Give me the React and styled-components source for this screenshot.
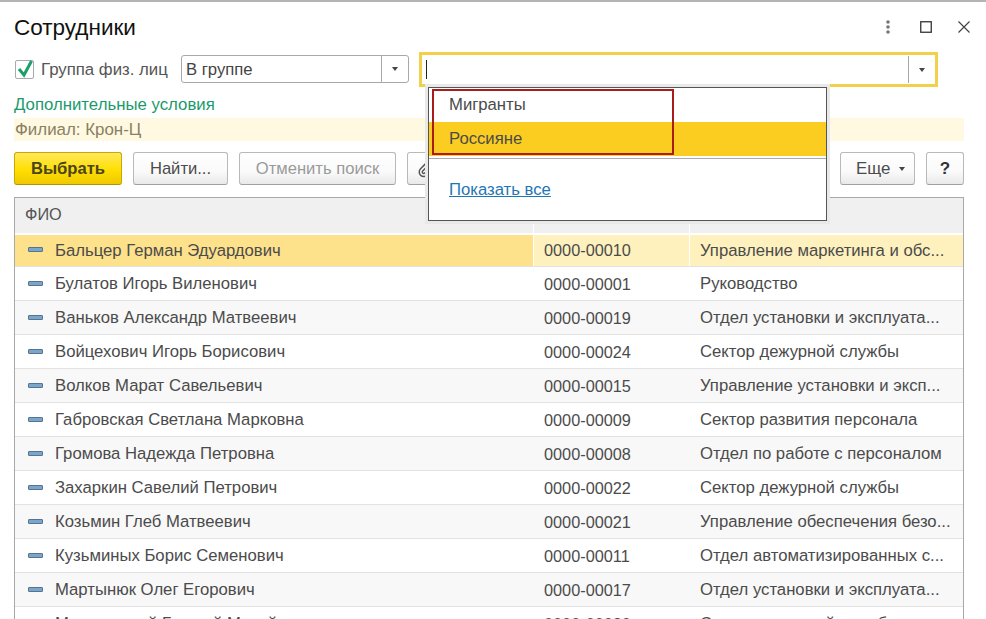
import React from "react";
import styled, { createGlobalStyle } from "styled-components";
import { Paperclip } from "lucide-react";

const GlobalStyle = createGlobalStyle`
  html, body {
    margin: 0;
    padding: 0;
    background: #fff;
    overflow: hidden;
  }
  body {
    font-family: "Liberation Sans", Arial, sans-serif;
    color: #4b4b4b;
  }
`;

const Win = styled.div`
  width: 986px;
  height: 619px;
  overflow: hidden;
  box-sizing: border-box;
  border-top: 2px solid #b4b4b4;
  padding: 0 22px 0 14px;
  position: relative;
`;

const TitleBar = styled.div`
  height: 50px;
  box-sizing: border-box;
  padding-top: 1px;
  display: flex;
  align-items: center;
  justify-content: space-between;
`;

const Title = styled.h1`
  margin: 0;
  font-size: 22.5px;
  font-weight: normal;
  color: #111;
`;

const WinButtons = styled.div`
  display: flex;
  align-items: center;
  gap: 26px;
  margin-right: -6px;
  margin-top: -1px;
`;

const Dots = styled.svg`
  margin-right: 3px;
`;

const FilterRow = styled.div`
  height: 35px;
  display: flex;
  align-items: center;
`;

const CheckLabel = styled.label`
  display: flex;
  align-items: center;
  font-size: 16.8px;
  margin-left: 1px;
  width: 166px;
  color: #555;
`;

const CheckBox = styled.span`
  width: 19px;
  height: 19px;
  box-sizing: border-box;
  border: 1px solid #aaa;
  border-radius: 2px;
  margin-right: 7px;
  position: relative;
  flex: none;
`;

const CheckMark = styled.svg`
  position: absolute;
  left: 0;
  top: -3px;
`;

const Combo = styled.div`
  width: 228px;
  height: 28px;
  box-sizing: border-box;
  border: 1px solid #a8a8a8;
  border-radius: 3px;
  display: flex;
  align-items: center;
  font-size: 16.7px;
  margin: -1px 10px 0 0;
  color: #444;
`;

const ComboText = styled.div`
  flex: 1;
  padding: 1px 0 0 4px;
`;

const ComboArrow = styled.div`
  width: 26px;
  height: 100%;
  border-left: 1px solid #a8a8a8;
  display: flex;
  align-items: center;
  justify-content: center;
`;

const Triangle = styled.span`
  width: 0;
  height: 0;
  border-left: 3.5px solid transparent;
  border-right: 3.5px solid transparent;
  border-top: 4px solid #444;
`;

const FocusCombo = styled.div`
  width: 519px;
  height: 35px;
  box-sizing: border-box;
  border: 3px solid #f3d04b;
  display: flex;
  align-items: center;
`;

const Caret = styled.span`
  width: 1px;
  height: 19px;
  background: #222;
  margin-left: 4px;
`;

const FocusArrow = styled.div`
  margin-left: auto;
  width: 26px;
  height: 27px;
  border-left: 1px solid #a8a8a8;
  display: flex;
  align-items: center;
  justify-content: center;
`;

const ExtraLink = styled.div`
  margin-top: 6px;
  height: 25px;
  line-height: 23px;
  font-size: 16.8px;
  color: #1a9a6c;
`;

const Strip = styled.div`
  height: 23px;
  line-height: 23px;
  background: #fff9e1;
  font-size: 16.9px;
  color: #8a8062;
  padding-left: 1px;
`;

const Toolbar = styled.div`
  margin-top: 11px;
  height: 33px;
  display: flex;
  gap: 11px;
`;

const Button = styled.div`
  width: ${(p) => p.$w}px;
  flex: none;
  box-sizing: border-box;
  height: 33px;
  border: 1px solid ${(p) => (p.$primary ? "#c9a800" : "#b9b9b9")};
  border-bottom-color: ${(p) => (p.$primary ? "#b09400" : "#a0a0a0")};
  border-radius: 3px;
  background: ${(p) =>
    p.$primary
      ? "linear-gradient(#ffe95c, #ffdf00 55%, #efc800)"
      : "linear-gradient(#fff, #fafafa 60%, #e9e9e9)"};
  display: flex;
  align-items: center;
  justify-content: center;
  font-size: 16.6px;
  font-weight: ${(p) => (p.$primary ? "bold" : "normal")};
  color: ${(p) => (p.$primary ? "#4a4420" : p.$off ? "#9a9a9a" : "#4b4b4b")};
`;

const MoreButton = styled(Button)`
  justify-content: flex-start;
  padding-left: 15px;
  gap: 9px;
  font-size: 16.9px;
`;

const HelpMark = styled.span`
  font-size: 17px;
  font-weight: bold;
  color: #333;
`;

const Spacer = styled.div`
  flex: 1;
`;

const Table = styled.div`
  margin-top: 12px;
  border: 1px solid #a8a8a8;
  border-bottom: 0;
`;

const HeadRow = styled.div`
  height: 37px;
  box-sizing: border-box;
  background: #f0f0f0;
  display: grid;
  grid-template-columns: 518px 156px 1fr;
  border-bottom: 2px solid #fff;
`;

const HeadCell = styled.div`
  padding-left: 10px;
  font-size: 16.3px;
  line-height: 33px;
  color: #555;
  border-left: ${(p) => (p.$first ? "0" : "1px solid #fff")};
`;

const Row = styled.div`
  height: ${(p) => (p.$active ? 32 : 34)}px;
  box-sizing: border-box;
  padding-top: ${(p) => (p.$active ? 0 : 1)}px;
  display: grid;
  grid-template-columns: 518px 156px 1fr;
  align-items: stretch;
  border-bottom: 1px solid #e2e2e2;
  background: ${(p) => (p.$odd ? "#f8f8f8" : "#fff")};
  font-size: 16.7px;
  color: #4b4b4b;
`;

const NameCell = styled.div`
  display: flex;
  align-items: center;
  padding-left: 13px;
  white-space: nowrap;
  background: ${(p) => (p.$active ? "#fde18b" : "transparent")};
`;

const Marker = styled.span`
  width: 15px;
  height: 5px;
  box-sizing: border-box;
  background: #7ba6cb;
  border: 1px solid #54748f;
  border-radius: 1px;
  margin-right: 12px;
  margin-top: -2px;
  flex: none;
`;

const Cell = styled.div`
  display: flex;
  align-items: center;
  padding-left: 10px;
  white-space: nowrap;
  font-size: ${(p) => (p.$code ? "16.3px" : "16.7px")};
  background: ${(p) => (p.$active ? "#fef1be" : "transparent")};
  border-left: 1px solid ${(p) => (p.$active ? "#fff" : "transparent")};
`;

const Popup = styled.div`
  position: absolute;
  left: 428px;
  top: 85px;
  width: 399px;
  height: 134px;
  box-sizing: border-box;
  background: #fff;
  border: 1px solid #555;
  box-shadow: 0 0 0 3px #e9e9e9;
  font-size: 16.7px;
  color: #4b4b4b;
`;

const PopupItem = styled.div`
  height: 34px;
  line-height: 33px;
  padding-left: 20px;
  background: ${(p) => (p.$hl ? "#fbcd20" : "#fff")};
`;

const PopupLine = styled.div`
  border-top: 1px solid #aaa;
  margin-top: 2px;
`;

const PopupLink = styled.a`
  display: inline-block;
  margin: 21px 0 0 20px;
  color: #1f76b5;
  text-decoration: underline;
`;

const RedFrame = styled.div`
  position: absolute;
  left: 3px;
  top: 1px;
  width: 242px;
  height: 66px;
  box-sizing: border-box;
  border: 2px solid #a81c1c;
`;

const rows = [
  ["Бальцер Герман Эдуардович", "0000-00010", "Управление маркетинга и обс..."],
  ["Булатов Игорь Виленович", "0000-00001", "Руководство"],
  ["Ваньков Александр Матвеевич", "0000-00019", "Отдел установки и эксплуата..."],
  ["Войцехович Игорь Борисович", "0000-00024", "Сектор дежурной службы"],
  ["Волков Марат Савельевич", "0000-00015", "Управление установки и эксп..."],
  ["Габровская Светлана Марковна", "0000-00009", "Сектор развития персонала"],
  ["Громова Надежда Петровна", "0000-00008", "Отдел по работе с персоналом"],
  ["Захаркин Савелий Петрович", "0000-00022", "Сектор дежурной службы"],
  ["Козьмин Глеб Матвеевич", "0000-00021", "Управление обеспечения безо..."],
  ["Кузьминых Борис Семенович", "0000-00011", "Отдел автоматизированных с..."],
  ["Мартынюк Олег Егорович", "0000-00017", "Отдел установки и эксплуата..."],
  ["Мелиховский Георгий Михайлович", "0000-00020", "Сектор дежурной службы"],
];

export default function App() {
  return (
    <Win>
      <GlobalStyle />
      <TitleBar>
        <Title>Сотрудники</Title>
        <WinButtons>
          <Dots width="6" height="14" viewBox="0 0 6 14">
            <circle cx="3" cy="2" r="1.8" fill="#777" />
            <circle cx="3" cy="7" r="1.8" fill="#777" />
            <circle cx="3" cy="12" r="1.8" fill="#777" />
          </Dots>
          <svg width="12" height="12" viewBox="0 0 12 12">
            <rect x="0.75" y="0.75" width="10.5" height="10.5" fill="none" stroke="#333" strokeWidth="1.3" />
          </svg>
          <svg width="12" height="12" viewBox="0 0 12 12">
            <path d="M0.5 0.5 L11.5 11.5 M11.5 0.5 L0.5 11.5" stroke="#444" strokeWidth="1.2" fill="none" />
          </svg>
        </WinButtons>
      </TitleBar>

      <FilterRow>
        <CheckLabel>
          <CheckBox>
            <CheckMark width="19" height="21" viewBox="0 0 19 21">
              <path d="M3 11 L8 17 L15.5 3" stroke="#1ba06a" strokeWidth="3" fill="none" />
            </CheckMark>
          </CheckBox>
          Группа физ. лиц
        </CheckLabel>
        <Combo>
          <ComboText>В группе</ComboText>
          <ComboArrow>
            <Triangle />
          </ComboArrow>
        </Combo>
        <FocusCombo>
          <Caret />
          <FocusArrow>
            <Triangle />
          </FocusArrow>
        </FocusCombo>
      </FilterRow>

      <ExtraLink>Дополнительные условия</ExtraLink>
      <Strip>Филиал: Крон-Ц</Strip>

      <Toolbar>
        <Button $primary $w={108}>Выбрать</Button>
        <Button $w={95}>Найти...</Button>
        <Button $w={157} $off>Отменить поиск</Button>
        <Button $w={38}>
          <Paperclip size={18} color="#555" />
        </Button>
        <Spacer />
        <MoreButton $w={75}>
          Еще <Triangle />
        </MoreButton>
        <Button $w={38}><HelpMark>?</HelpMark></Button>
      </Toolbar>

      <Table>
        <HeadRow>
          <HeadCell $first>ФИО</HeadCell>
          <HeadCell />
          <HeadCell />
        </HeadRow>
        {rows.map((r, i) => (
          <Row key={r[1]} $odd={i % 2 === 0 && i > 0} $active={i === 0}>
            <NameCell $active={i === 0}>
              <Marker />
              {r[0]}
            </NameCell>
            <Cell $code $active={i === 0}>{r[1]}</Cell>
            <Cell $active={i === 0}>{r[2]}</Cell>
          </Row>
        ))}
      </Table>

      <Popup>
        <PopupItem>Мигранты</PopupItem>
        <PopupItem $hl>Россияне</PopupItem>
        <PopupLine />
        <PopupLink>Показать все</PopupLink>
        <RedFrame />
      </Popup>
    </Win>
  );
}
